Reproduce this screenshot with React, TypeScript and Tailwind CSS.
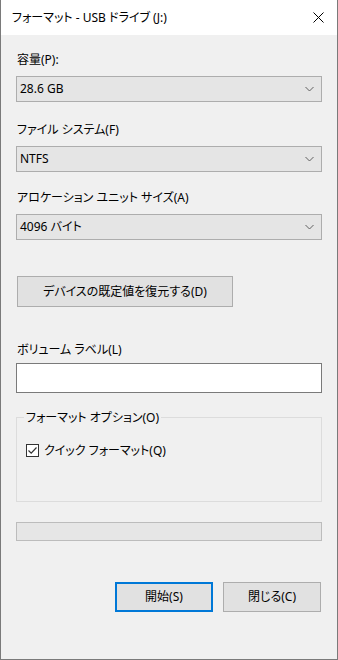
import React from "react";

const font = { fontFamily: '"Noto Sans", "Noto Sans CJK JP", sans-serif', fontFeatureSettings: '"palt"' };

function Chevron() {
  return (
    <svg width="9" height="6" viewBox="0 0 9 6" className="absolute right-[7px] top-1/2 -translate-y-1/2">
      <path d="M0.5 1 L4.5 5 L8.5 1" fill="none" stroke="#606060" strokeWidth="1" />
    </svg>
  );
}

function Combo({ value }: { value: string }) {
  return (
    <div className="relative h-[26px] w-full border border-[#adadad] bg-[#e5e5e5] flex items-center pl-[3px]">
      <span className="text-[12px] text-black leading-none">{value}</span>
      <Chevron />
    </div>
  );
}

function Label({ children, className }: { children: React.ReactNode; className?: string }) {
  return (
    <div className={"h-[16px] flex items-center text-[12px] text-black leading-none " + (className || "")}>
      {children}
    </div>
  );
}

export default function App() {
  return (
    <div className="w-[338px] h-[660px] box-border border-l border-r border-b border-[#7a7a7a] bg-[#f0f0f0] flex flex-col" style={font}>
      <div className="h-[35px] bg-white flex items-center pl-[11px] pr-[13px] shrink-0">
        <span className="text-[12px] text-black flex-1 leading-none">フォーマット - USB ドライブ (J:)</span>
        <svg width="11" height="11" viewBox="0 0 11 11">
          <path d="M0.5 0.5 L10.5 10.5 M10.5 0.5 L0.5 10.5" stroke="#000" strokeWidth="1" />
        </svg>
      </div>
      <div className="flex flex-col pl-[15px] pr-[15px]">
        <Label className="mt-[17px] pl-[1px]">容量(P):</Label>
        <div className="mt-[8px]"><Combo value="28.6 GB" /></div>
        <Label className="mt-[20px] pl-[1px]">ファイル システム(F)</Label>
        <div className="mt-[8px]"><Combo value="NTFS" /></div>
        <Label className="mt-[18px] pl-[1px]">アロケーション ユニット サイズ(A)</Label>
        <div className="mt-[8px]"><Combo value="4096 バイト" /></div>
        <div className="mt-[36px] pl-[1px]">
          <div className="w-[216px] h-[31px] border border-[#adadad] bg-[#e1e1e1] flex items-center justify-center text-[12px] text-black leading-none">
            デバイスの既定値を復元する(D)
          </div>
        </div>
        <Label className="mt-[35px] pl-[1px]">ボリューム ラベル(L)</Label>
        <div className="mt-[5px] h-[30px] w-full border border-[#7a7a7a] bg-white" />
        <div className="relative mt-[24px] h-[85px] w-full border border-[#dcdcdc]">
          <div className="absolute left-[7px] -top-[8px] px-[2px] bg-[#f0f0f0] h-[16px] flex items-center text-[12px] text-black leading-none">
            フォーマット オプション(O)
          </div>
          <div className="absolute left-[9px] top-[26px] flex items-center gap-[5px]">
            <div className="w-[13px] h-[13px] border border-[#333] bg-white flex items-center justify-center">
              <svg width="11" height="11" viewBox="0 0 11 11">
                <path d="M1.5 5.5 L4.2 8.2 L9.5 2.5" fill="none" stroke="#333" strokeWidth="1.2" />
              </svg>
            </div>
            <span className="text-[12px] text-black leading-none">クイック フォーマット(Q)</span>
          </div>
        </div>
        <div className="mt-[20px] h-[19px] w-full border border-[#bcbcbc] bg-[#e6e6e6]" />
        <div className="mt-[41px] flex justify-end gap-[10px] pr-[1px]">
          <div className="w-[98px] h-[30px] border-2 border-[#0078d7] bg-[#e1e1e1] flex items-center justify-center text-[12px] text-black leading-none">
            開始(S)
          </div>
          <div className="w-[98px] h-[30px] border border-[#adadad] bg-[#e1e1e1] flex items-center justify-center text-[12px] text-black leading-none">
            閉じる(C)
          </div>
        </div>
      </div>
    </div>
  );
}
